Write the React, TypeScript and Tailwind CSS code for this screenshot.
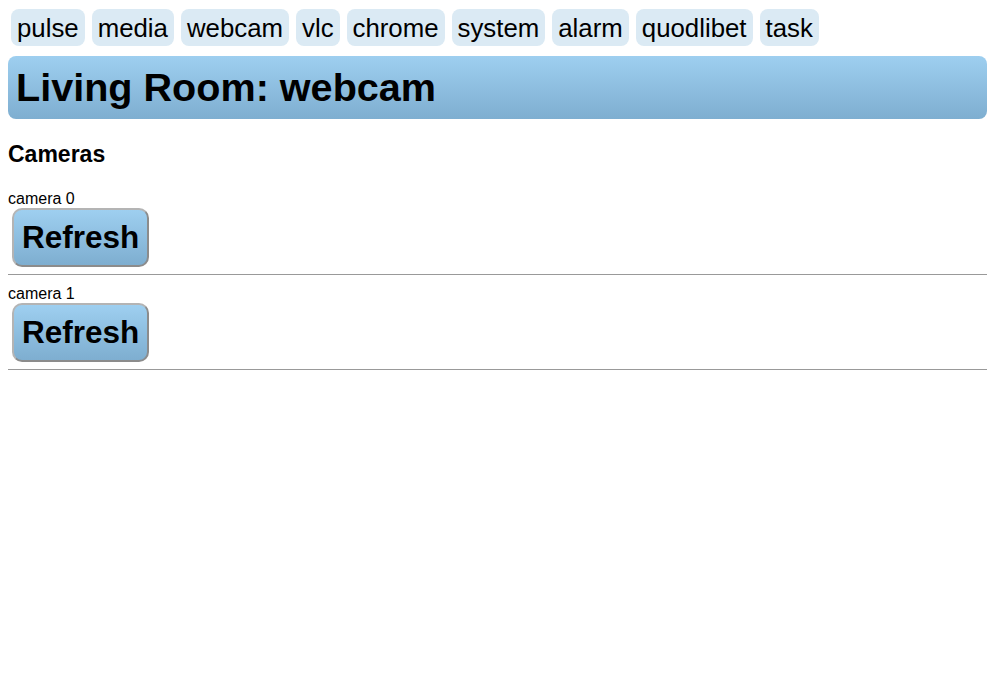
const tabs = ["pulse", "media", "webcam", "vlc", "chrome", "system", "alarm", "quodlibet", "task"];
const cameras = ["camera 0", "camera 1"];

export default function App() {
  return (
    <div className="min-h-screen bg-white p-2 font-['Liberation_Sans',Arial,sans-serif] text-black">
      <nav className="flex flex-wrap gap-[7px] pl-[3px] pt-[1px]">
        {tabs.map((tab) => (
          <a key={tab} href="#" className="rounded-[8px] bg-[#dbeaf4] px-[6px] pb-[4px] pt-[6px] text-[25.8px] leading-[27px] text-black no-underline">{tab}</a>
        ))}
      </nav>

      <h1 className="mt-[10px] rounded-[8px] bg-gradient-to-b from-[#9ecff0] to-[#7eaed0] px-[8px] py-[8px] text-[39.6px] font-bold leading-[47px]">Living Room: webcam</h1>

      <h3 className="mt-[22px] text-[23px] font-bold leading-[27px]">Cameras</h3>

      <div className="mt-[22px]">
        {cameras.map((name) => (
          <section key={name}>
            <div className="text-[16px] leading-[18px]">{name}</div>
            <button type="button" className="ml-[4px] rounded-[10px] border-2 border-[#b4b4b4] border-b-[#8c8c8c] border-r-[#8c8c8c] bg-gradient-to-b from-[#9ecff0] to-[#7eaed0] px-[8px] py-[7px] text-[31.5px] font-bold leading-[41px]">Refresh</button>
            <hr className="mb-[10px] mt-[7px] border-t border-[#999]" />
          </section>
        ))}
      </div>
    </div>
  );
}
